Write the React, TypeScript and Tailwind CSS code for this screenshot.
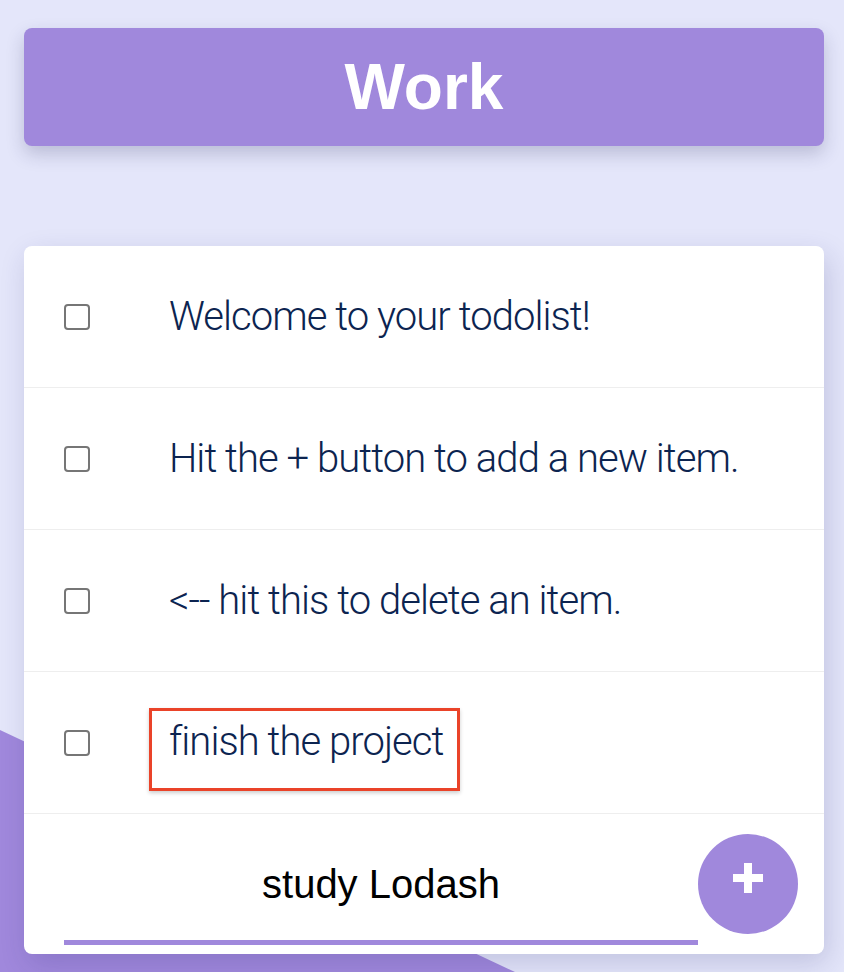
import { JSX, useState } from "react";

const items = [
    "Welcome to your todolist!",
    "Hit the + button to add a new item.",
    "<-- hit this to delete an item.",
];

export default function App(): JSX.Element {
    const [newItem, setNewItem] = useState<string>("study Lodash");

    return (
        <div className="relative min-h-screen overflow-hidden bg-[#e4e6fa] pl-6 pr-5 pt-7 pb-10">
            {/* background wedge */}
            <svg className="absolute left-0 top-[730px]" width="520" height="242" viewBox="0 0 520 242">
                <polygon points="0,0 515,242 0,242" fill="#a088dc" />
            </svg>

            <div className="relative">
                {/* Title */}
                <header className="flex h-[118px] items-center justify-center rounded-lg bg-[#a088dc] shadow-[0_8px_18px_rgba(40,40,90,0.22)]">
                    <h1 className="font-['Liberation_Sans',Arial,sans-serif] text-[64px] font-bold leading-none text-white">
                        Work
                    </h1>
                </header>

                {/* List */}
                <section className="mt-[100px] rounded-lg bg-white shadow-[4px_10px_28px_rgba(40,40,110,0.18)]">
                    {items.map((text) => (
                        <div key={text} className="flex h-[142px] items-center border-b border-[#eeeeee] pl-10">
                            <input type="checkbox" className="h-[26px] w-[26px] shrink-0 appearance-none rounded-[4px] border-2 border-[#767676] bg-white" />
                            <span className="ml-[79px] font-['Roboto',sans-serif] text-[40px] font-light leading-none tracking-[-0.95px] text-[#0c2450]">
                                {text}
                            </span>
                        </div>
                    ))}

                    {/* item being edited */}
                    <div className="flex h-[142px] items-center border-b border-[#eeeeee] pl-10">
                        <input type="checkbox" className="h-[26px] w-[26px] shrink-0 appearance-none rounded-[4px] border-2 border-[#767676] bg-white" />
                        <div className="ml-[59px] mt-[14px] border-[3px] border-[#ea4329] pt-[11px] pb-[26px] pl-[17px] pr-[14px] shadow-[0_2px_4px_rgba(0,0,0,0.2)]">
                            <span className="block font-['Roboto',sans-serif] text-[40px] font-light leading-none tracking-[-0.95px] text-[#0c2450]">
                                finish the project
                            </span>
                        </div>
                    </div>

                    {/* new item row */}
                    <div className="flex h-[140px] items-end pl-10 pr-[26px]">
                        <input
                            type="text"
                            value={newItem}
                            autoFocus
                            spellCheck
                            onChange={(e) => setNewItem(e.target.value)}
                            className="mb-[9px] h-[116px] w-[634px] border-b-[5px] border-[#a088dc] bg-transparent text-center font-['Liberation_Sans',Arial,sans-serif] text-[40px] text-black caret-black outline-none"
                        />
                        <button
                            type="button"
                            className="flex h-[100px] w-[100px] shrink-0 items-center justify-center self-center rounded-full bg-[#a088dc]"
                        >
                            <svg width="30" height="30" viewBox="0 0 30 30" className="-mt-3">
                                <rect x="11" y="0" width="8" height="30" fill="white" />
                                <rect x="0" y="11" width="30" height="8" fill="white" />
                            </svg>
                        </button>
                    </div>
                </section>
            </div>
        </div>
    );
}
